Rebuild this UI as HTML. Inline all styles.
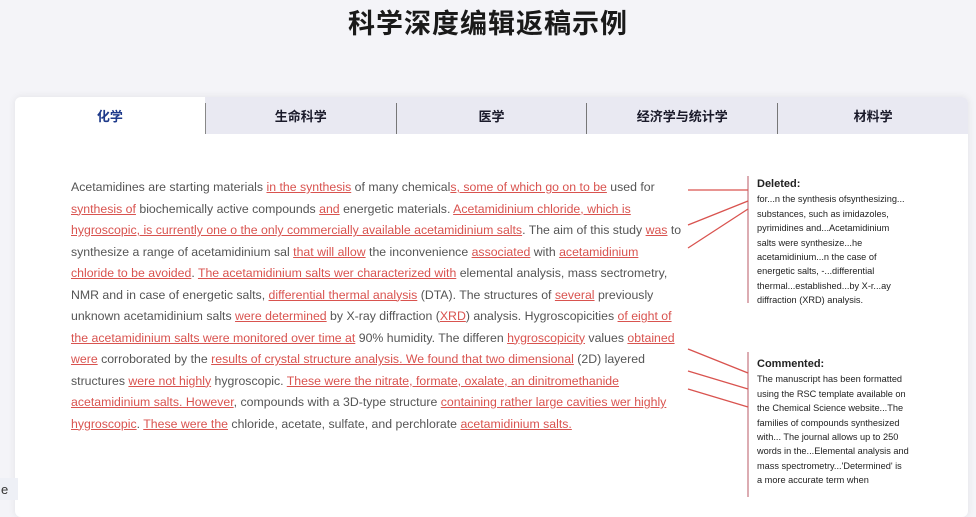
<!DOCTYPE html>
<html><head><meta charset="utf-8"><style>
*{margin:0;padding:0;box-sizing:border-box}
body{width:976px;height:500px;overflow:hidden;background:#f4f4f8;font-family:"Liberation Sans","Noto Sans CJK SC",sans-serif;position:relative}
h1{position:absolute;top:2px;left:0;width:976px;text-align:center;font-size:27px;font-weight:bold;color:#1a1a1a;letter-spacing:1px}
.card{position:absolute;left:15px;top:97px;width:953px;height:420px;background:#fff;border-radius:6px;box-shadow:0 0 8px rgba(0,0,0,.08);overflow:hidden}
.tabs{position:absolute;top:0;left:0;width:953px;height:37px;display:flex;background:#e9e9f2}
.tab{flex:1;text-align:center;font-size:13px;font-weight:bold;color:#1a1a2a;border-left:1px solid #777;margin:6px 0 0;line-height:28px;height:31px}
.tab.a{background:#fff;color:#1e3a8a;border:none;margin:0;height:37px;line-height:40px}
.tab.a+.tab{border-left:1px solid #888}
.txt{position:absolute;left:56px;top:80px;font-size:12.3px;color:#555;line-height:21.5px;white-space:nowrap}
.r{color:#d9534f;text-decoration:underline}
.side{position:absolute;left:742px;font-family:"Liberation Sans",sans-serif;font-size:9.2px;line-height:14.4px;color:#222;white-space:nowrap}
.side b{font-size:11px;display:block;margin-bottom:1px}
</style></head><body>
<h1>科学深度编辑返稿示例</h1>
<div class="card">
<div class="tabs"><div class="tab a">化学</div><div class="tab">生命科学</div><div class="tab">医学</div><div class="tab">经济学与统计学</div><div class="tab">材料学</div></div>
<div class="txt">
<div>Acetamidines are starting materials <span class="r">in the synthesis</span> of many chemical<span class="r">s, some of which go on to be</span> used for</div>
<div><span class="r">synthesis of</span> biochemically active compounds <span class="r">and</span> energetic materials. <span class="r">Acetamidinium chloride, which is</span></div>
<div><span class="r">hygroscopic, is currently one o the only commercially available acetamidinium salts</span>. The aim of this study <span class="r">was</span> to</div>
<div>synthesize a range of acetamidinium sal <span class="r">that will allow</span> the inconvenience <span class="r">associated</span> with <span class="r">acetamidinium</span></div>
<div><span class="r">chloride to be avoided</span>. <span class="r">The acetamidinium salts wer characterized with</span> elemental analysis, mass sectrometry,</div>
<div>NMR and in case of energetic salts, <span class="r">differential thermal analysis</span> (DTA). The structures of <span class="r">several</span> previously</div>
<div>unknown acetamidinium salts <span class="r">were determined</span> by X-ray diffraction (<span class="r">XRD</span>) analysis. Hygroscopicities <span class="r">of eight of</span></div>
<div><span class="r">the acetamidinium salts were monitored over time at</span> 90% humidity. The differen <span class="r">hygroscopicity</span> values <span class="r">obtained</span></div>
<div><span class="r">were</span> corroborated by the <span class="r">results of crystal structure analysis. We found that two dimensional</span> (2D) layered</div>
<div>structures <span class="r">were not highly</span> hygroscopic. <span class="r">These were the nitrate, formate, oxalate, an dinitromethanide</span></div>
<div><span class="r">acetamidinium salts. However</span>, compounds with a 3D-type structure <span class="r">containing rather large cavities wer highly</span></div>
<div><span class="r">hygroscopic</span>. <span class="r">These were the</span> chloride, acetate, sulfate, and perchlorate <span class="r">acetamidinium salts.</span></div>
</div>
<svg style="position:absolute;left:0;top:0" width="953" height="420">
<g stroke="#d9534f" stroke-width="1.3" fill="none">
<line x1="733" y1="79" x2="733" y2="206" stroke="#c98088"/>
<line x1="673" y1="93" x2="733" y2="93"/>
<line x1="673" y1="128" x2="733" y2="104"/>
<line x1="673" y1="151" x2="733" y2="112"/>
<line x1="733" y1="255" x2="733" y2="400" stroke="#c98088"/>
<line x1="673" y1="252" x2="733" y2="276"/>
<line x1="673" y1="274" x2="733" y2="292"/>
<line x1="673" y1="292" x2="733" y2="310"/>
</g></svg>
<div class="side" style="top:80px"><b>Deleted:</b>for...n the synthesis ofsynthesizing...<br>substances, such as imidazoles,<br>pyrimidines and...Acetamidinium<br>salts were synthesize...he<br>acetamidinium...n the case of<br>energetic salts, -...differential<br>thermal...established...by X-r...ay<br>diffraction (XRD) analysis.</div>
<div class="side" style="top:260px"><b>Commented:</b>The manuscript has been formatted<br>using the RSC template available on<br>the Chemical Science website...The<br>families of compounds synthesized<br>with... The journal allows up to 250<br>words in the...Elemental analysis and<br>mass spectrometry...'Determined' is<br>a more accurate term when</div>
</div>
<div style="position:absolute;left:0;top:478px;width:18px;height:22px;background:#eef0f6;font-size:13px;color:#333;padding:4px 0 0 1px">e</div>
</body></html>
